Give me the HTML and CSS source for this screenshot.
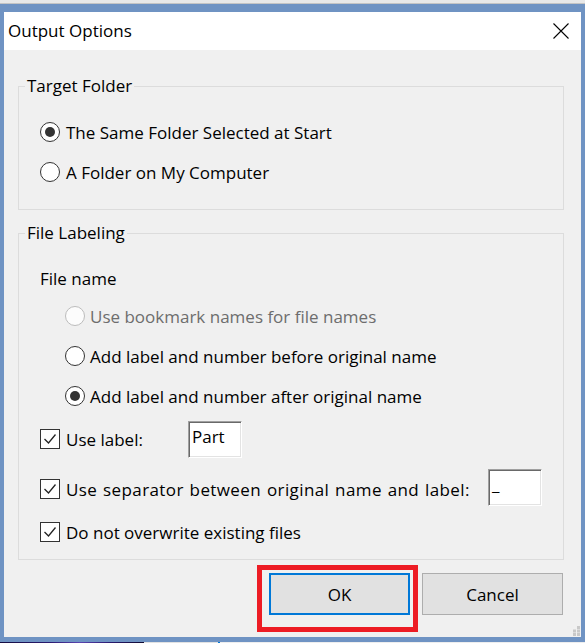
FILE: index.html
```html
<!DOCTYPE html>
<html>
<head>
<meta charset="utf-8">
<link rel="stylesheet" href="styles.css">
</head>
<body>
<div class="screen">
  <div class="topstrip"></div>
  <div class="window">
    <div class="titlebar">
      <span class="title">Output Options</span>
      <svg class="close" width="16" height="16" viewBox="0 0 16 16"><path d="M0.5 0.5 L15.5 15.5 M15.5 0.5 L0.5 15.5" stroke="#000" stroke-width="1.1" fill="none"/></svg>
    </div>
    <div class="client">
      <fieldset class="group g1">
        <legend>Target Folder</legend>
        <div class="gbody b1">
          <div class="row"><span class="radio checked"></span><span class="lbl">The Same Folder Selected at Start</span></div>
          <div class="row"><span class="radio"></span><span class="lbl">A Folder on My Computer</span></div>
        </div>
      </fieldset>
      <fieldset class="group g2">
        <legend>File Labeling</legend>
        <div class="gbody b2">
          <div class="fname">File name</div>
          <div class="row sub"><span class="radio disabled"></span><span class="lbl dis">Use bookmark names for file names</span></div>
          <div class="row sub"><span class="radio"></span><span class="lbl">Add label and number before original name</span></div>
          <div class="row sub"><span class="radio checked"></span><span class="lbl">Add label and number after original name</span></div>
          <div class="row crow c1">
            <span class="check"><svg width="18" height="18" viewBox="0 0 18 18"><path d="M3.5 9 L7.5 13 L14.5 4.5" stroke="#222" stroke-width="1.3" fill="none"/></svg></span>
            <span class="lbl w1">Use label:</span>
            <span class="field f1">Part</span>
          </div>
          <div class="row crow c2">
            <span class="check"><svg width="18" height="18" viewBox="0 0 18 18"><path d="M3.5 9 L7.5 13 L14.5 4.5" stroke="#222" stroke-width="1.3" fill="none"/></svg></span>
            <span class="lbl w2 wide">Use separator between original name and label:</span>
            <span class="field f2">_</span>
          </div>
          <div class="row crow c3">
            <span class="check"><svg width="18" height="18" viewBox="0 0 18 18"><path d="M3.5 9 L7.5 13 L14.5 4.5" stroke="#222" stroke-width="1.3" fill="none"/></svg></span>
            <span class="lbl">Do not overwrite existing files</span>
          </div>
        </div>
      </fieldset>
      <div class="buttons">
        <button class="btn ok">OK</button>
        <button class="btn cancel">Cancel</button>
      </div>
      <svg class="grip" width="10" height="10" viewBox="0 0 10 10">
        <rect x="7" y="0" width="3" height="3" fill="#c8c8c8"/>
        <rect x="3" y="3.5" width="3" height="3" fill="#c8c8c8"/>
        <rect x="7" y="3.5" width="3" height="3" fill="#c8c8c8"/>
        <rect x="3" y="7" width="3" height="3" fill="#c8c8c8"/>
        <rect x="7" y="7" width="3" height="3" fill="#c8c8c8"/>
      </svg>
    </div>
  </div>
  <div class="desktop"></div>
</div>
</body>
</html>
```
FILE: styles.css
```css
* { box-sizing: border-box; }
html, body { margin: 0; padding: 0; }
body {
  width: 585px;
  height: 643px;
  overflow: hidden;
  font-family: "Open Sans", "Noto Sans", sans-serif;
  font-size: 17px;
  color: #000;
  background: #f0f0f0;
}
.screen { width: 585px; height: 643px; display: flex; flex-direction: column; }
.topstrip {
  height: 4px;
  background: #e8e8e8;
  border-bottom: 1px solid #c4c4c4;
}
.window {
  height: 638px;
  border-top: 8px solid #6f93c3;
  border-left: 4px solid #6f93c3;
  border-right: 4px solid #6f93c3;
  border-bottom: 5px solid #6f93c3;
  display: flex;
  flex-direction: column;
}
.desktop {
  height: 1px;
  background: linear-gradient(to right, #140c40 0, #2a1a70 50px, #5a44b0 80px, #2a1a70 110px, #100a30 144px, #e2e2e2 144px, #e2e2e2 218px, #0078d7 218px, #0078d7 220px, #eeeeee 220px);
}
.titlebar {
  height: 38px;
  background: #fff;
  display: flex;
  align-items: center;
  justify-content: space-between;
  padding-left: 4px;
  padding-right: 12px;
}
.title { font-size: 17px; margin-top: -1px; }
.close { display: block; }
.client {
  flex: 1;
  background: #f0f0f0;
  position: relative;
  padding-top: 25px;
}
.group {
  margin: 0 17px 0 14px;
  padding: 0;
  border: 1px solid #dcdcdc;
  min-width: 0;
}
.group legend {
  margin-left: 6px;
  padding: 0 2px;
  line-height: 22px;
  font-size: 17px;
}
.g2 { margin-top: 12px; }
.gbody { display: flex; flex-direction: column; padding-left: 21px; }
.b1 { padding-top: 15px; padding-bottom: 17px; }
.b2 { padding-top: 17px; padding-bottom: 7px; }
.row { display: flex; align-items: center; height: 40px; }
.fname { height: 35px; line-height: 35px; font-size: 17px; }
.sub { padding-left: 25px; }
.lbl { font-size: 17px; margin-left: 6px; white-space: nowrap; }
.sub .lbl { margin-left: 5px; }
.wide { letter-spacing: 0.4px; word-spacing: 1px; }
.dis { color: #6d6d6d; }
.radio {
  width: 20px; height: 20px;
  border: 1px solid #333;
  border-radius: 50%;
  background: #fff;
  flex: none;
  display: flex;
  align-items: center;
  justify-content: center;
}
.radio.checked::after {
  content: "";
  width: 10px; height: 10px;
  border-radius: 50%;
  background: #333;
}
.radio.disabled { border-color: #bcbcbc; background: #fcfcfc; }
.check {
  width: 20px; height: 20px;
  border: 1px solid #333;
  background: #fff;
  flex: none;
  display: flex;
  align-items: center;
  justify-content: center;
}
.check svg { display: block; }
.c1 { margin-top: 3px; }
.c2 { margin-top: 10px; }
.c3 { margin-top: 3px; }
.w1 { width: 122px; }
.w2 { width: 422px; }
.field {
  height: 37px;
  background: #fff;
  border-top: 1px solid #a0a0a0;
  border-left: 1px solid #a0a0a0;
  border-right: 1px solid #fff;
  border-bottom: 1px solid #fff;
  box-shadow: inset 1px 1px 0 #696969, inset -1px -1px 0 #e3e3e3;
  font-size: 17px;
  line-height: 30px;
  padding-left: 3px;
}
.f1 { width: 54px; margin-left: 0; }
.f2 { width: 54px; margin-top: -3px; }
.buttons {
  display: flex;
  justify-content: flex-end;
  gap: 12px;
  margin-top: 13px;
  padding-right: 18px;
}
.btn {
  width: 141px;
  height: 42px;
  font-family: "Open Sans", "Noto Sans", sans-serif;
  font-size: 17px;
  color: #000;
  background: #e1e1e1;
  border: 1px solid #adadad;
  padding: 0;
}
.ok { border: 2px solid #0078d7; position: relative; }
.ok::after {
  content: "";
  position: absolute;
  left: -14px;
  top: -10px;
  width: 161px;
  height: 67px;
  border: 5px solid #ed1c24;
  box-sizing: border-box;
}
.grip { position: absolute; right: 1px; bottom: 1px; display: block; }
```
